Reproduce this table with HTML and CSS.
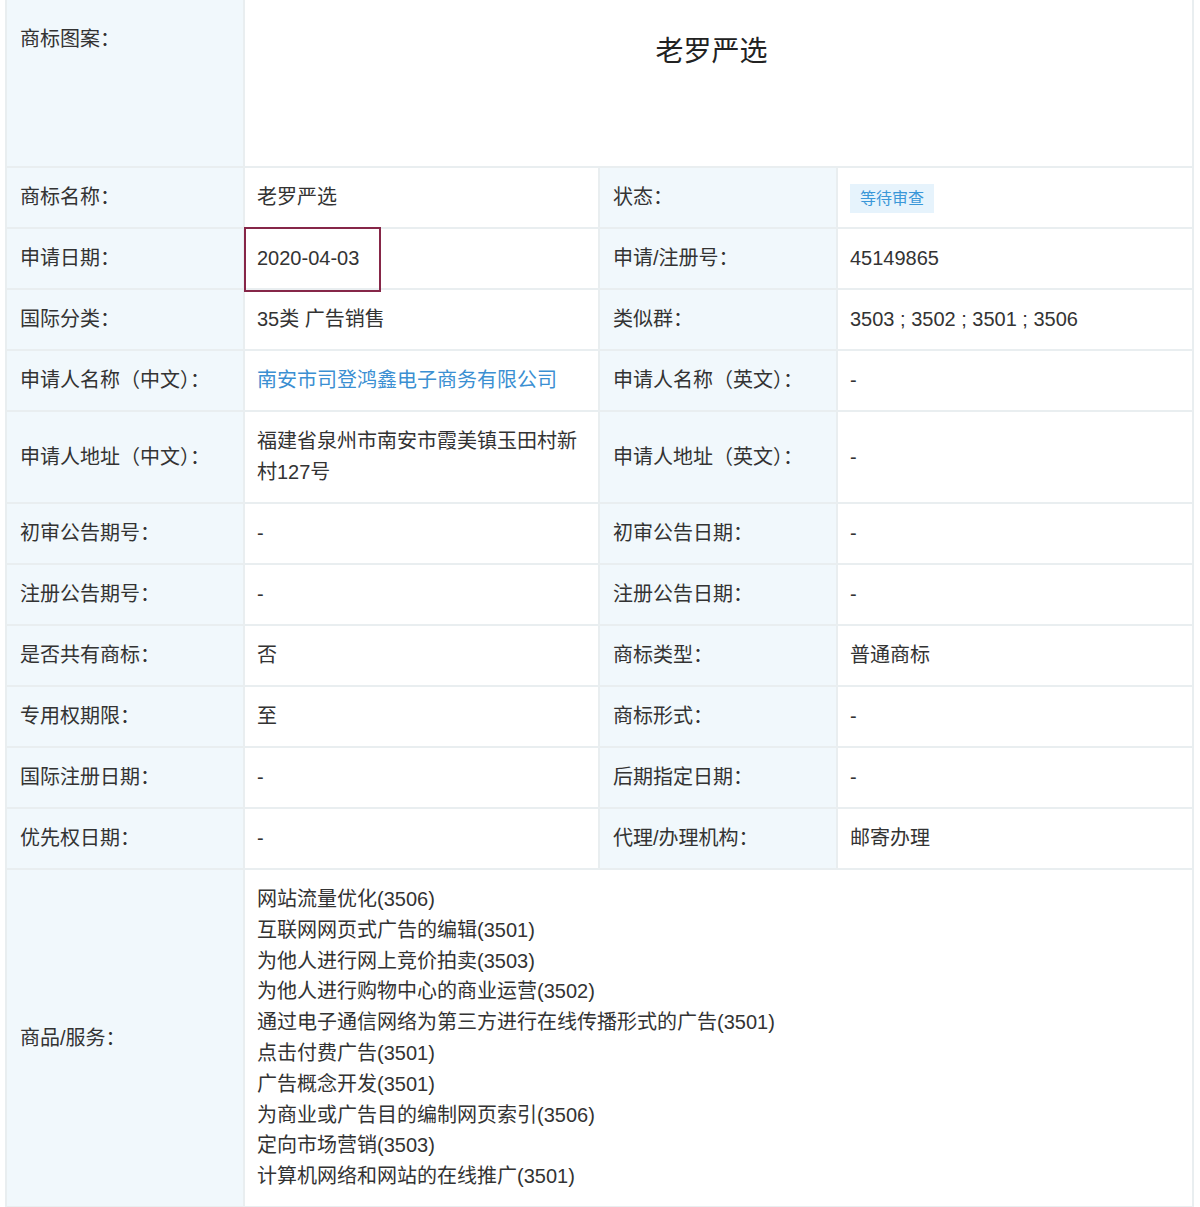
FILE: index.html
```html
<!DOCTYPE html>
<html lang="zh-CN">
<head>
<meta charset="utf-8">
<title>商标详情</title>
<link rel="stylesheet" href="styles.css">
</head>
<body>
<table class="detail">
  <colgroup>
    <col class="c-label"><col class="c-value"><col class="c-label"><col class="c-value2">
  </colgroup>
  <tbody>
    <tr class="row-logo">
      <td class="label label-top">商标图案：</td>
      <td class="logo-cell" colspan="3"><div class="logo-text">老罗严选</div></td>
    </tr>
    <tr>
      <td class="label">商标名称：</td>
      <td class="value">老罗严选</td>
      <td class="label">状态：</td>
      <td class="value"><span class="badge">等待审查</span></td>
    </tr>
    <tr>
      <td class="label">申请日期：</td>
      <td class="value marked">2020-04-03</td>
      <td class="label">申请/注册号：</td>
      <td class="value">45149865</td>
    </tr>
    <tr>
      <td class="label">国际分类：</td>
      <td class="value">35类 广告销售</td>
      <td class="label">类似群：</td>
      <td class="value">3503 ; 3502 ; 3501 ; 3506</td>
    </tr>
    <tr>
      <td class="label">申请人名称（中文）：</td>
      <td class="value"><a class="link" href="#">南安市司登鸿鑫电子商务有限公司</a></td>
      <td class="label">申请人名称（英文）：</td>
      <td class="value">-</td>
    </tr>
    <tr>
      <td class="label">申请人地址（中文）：</td>
      <td class="value">福建省泉州市南安市霞美镇玉田村新村127号</td>
      <td class="label">申请人地址（英文）：</td>
      <td class="value">-</td>
    </tr>
    <tr>
      <td class="label">初审公告期号：</td>
      <td class="value">-</td>
      <td class="label">初审公告日期：</td>
      <td class="value">-</td>
    </tr>
    <tr>
      <td class="label">注册公告期号：</td>
      <td class="value">-</td>
      <td class="label">注册公告日期：</td>
      <td class="value">-</td>
    </tr>
    <tr>
      <td class="label">是否共有商标：</td>
      <td class="value">否</td>
      <td class="label">商标类型：</td>
      <td class="value">普通商标</td>
    </tr>
    <tr>
      <td class="label">专用权期限：</td>
      <td class="value">至</td>
      <td class="label">商标形式：</td>
      <td class="value">-</td>
    </tr>
    <tr>
      <td class="label">国际注册日期：</td>
      <td class="value">-</td>
      <td class="label">后期指定日期：</td>
      <td class="value">-</td>
    </tr>
    <tr>
      <td class="label">优先权日期：</td>
      <td class="value">-</td>
      <td class="label">代理/办理机构：</td>
      <td class="value">邮寄办理</td>
    </tr>
    <tr>
      <td class="label">商品/服务：</td>
      <td class="value goods" colspan="3">
        <div>网站流量优化(3506)</div>
        <div>互联网网页式广告的编辑(3501)</div>
        <div>为他人进行网上竞价拍卖(3503)</div>
        <div>为他人进行购物中心的商业运营(3502)</div>
        <div>通过电子通信网络为第三方进行在线传播形式的广告(3501)</div>
        <div>点击付费广告(3501)</div>
        <div>广告概念开发(3501)</div>
        <div>为商业或广告目的编制网页索引(3506)</div>
        <div>定向市场营销(3503)</div>
        <div>计算机网络和网站的在线推广(3501)</div>
      </td>
    </tr>
  </tbody>
</table>
</body>
</html>
```

FILE: styles.css
```css
html, body {
  margin: 0;
  padding: 0;
  background: #ffffff;
}

body {
  font-family: "Liberation Sans", "Noto Sans CJK SC", sans-serif;
  font-size: 20px;
  color: #333333;
}

.detail {
  margin-left: 5px;
  width: 1187px;
  table-layout: fixed;
  border-collapse: collapse;
}

.c-label { width: 238px; }
.c-value { width: 355px; }
.c-value2 { width: 356px; }

.detail td {
  border: 2px solid #e9eef0;
  padding: 14px 12px 14.2px;
  line-height: 30.8px;
  vertical-align: middle;
  word-break: break-all;
}

.detail tr:first-child td {
  border-top: 0;
}

.detail td.label {
  background: #f1f8fc;
  color: #333333;
  padding-left: 13px;
}

.value {
  background: #ffffff;
}

.row-logo td {
  height: 167px;
  box-sizing: border-box;
  vertical-align: top;
}

.detail td.label-top {
  padding-top: 24px;
}

.detail td.logo-cell {
  text-align: center;
  padding-top: 46px;
  padding-left: 12px;
  padding-right: 26px;
}

.logo-text {
  font-size: 28px;
  line-height: 12px;
  color: #222222;
}

.badge {
  display: inline-block;
  background: #e6f3fc;
  color: #3a97d8;
  font-size: 16px;
  line-height: 29px;
  padding: 0 10px;
  vertical-align: middle;
}

.link {
  color: #3b8fd2;
  text-decoration: none;
}

.marked {
  position: relative;
}

.marked::after {
  content: "";
  position: absolute;
  left: -1px;
  top: -2px;
  width: 137px;
  height: 65px;
  box-sizing: border-box;
  border: 2px solid #862648;
  pointer-events: none;
}

.goods {
  vertical-align: top;
}
```
